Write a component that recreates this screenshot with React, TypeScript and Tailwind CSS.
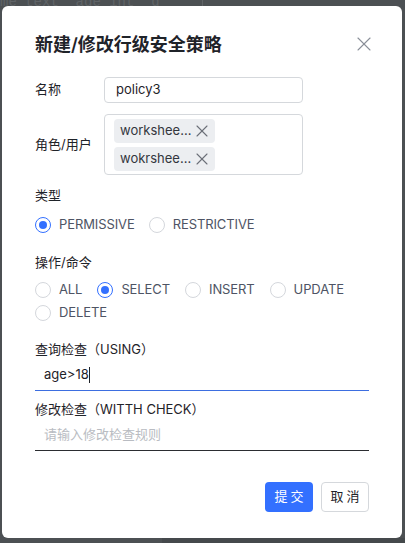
import { X } from "lucide-react";

const FONT = "font-['Inter','Noto_Sans_CJK_SC',sans-serif]";

function Radio({ label, checked, wide }: { label: string; checked?: boolean; wide?: boolean }) {
  return (
    <label className={`flex items-center h-[23px] ${wide ? "mr-[15px]" : "mr-[14px]"}`}>
      <span
        className={`flex items-center justify-center w-[16px] h-[16px] rounded-full border ${
          checked ? "border-[#3370ff]" : "border-[#d4d7dc]"
        }`}
      >
        {checked && <span className="w-[8px] h-[8px] rounded-full bg-[#3370ff]" />}
      </span>
      <span className="ml-[8px] text-[13px] text-[#4e5464] tracking-[-0.1px]">{label}</span>
    </label>
  );
}

function Tag({ text }: { text: string }) {
  return (
    <div className="flex items-center w-[101px] h-[24px] rounded-[4px] bg-[#eceef1] pl-[6px]">
      <span className="text-[13px] text-[#33363d]">{text}</span>
      <X className="ml-[1px] w-[20px] h-[20px] text-[#6b6f78]" strokeWidth={1.3} />
    </div>
  );
}

export default function App() {
  return (
    <div className={`relative w-[405px] h-[543px] overflow-hidden bg-[#4c5053] ${FONT}`}>
      {/* page behind the overlay */}
      <div className="absolute left-[0px] top-[-8px] font-['Liberation_Mono',monospace] text-[14px] text-[#5f6366] whitespace-pre">
        me text  age int  d
      </div>
      <div className="absolute left-[202px] top-0 w-px h-[8px] bg-[#5f6366]" />
      <div className="absolute left-[162px] top-[538px] w-[243px] h-[5px] bg-[#45494c]" />

      <div className="absolute left-[2px] top-[6px] w-[400px] h-[532px] rounded-[6px] bg-white pl-[33px] pr-[33px] pt-[25px]">
        <div className="flex items-center justify-between h-[26px]">
          <h2 className="text-[18px] font-semibold text-[#1f2329]">新建/修改行级安全策略</h2>
          <X className="w-[24px] h-[24px] text-[#8a8f99] mr-[-7px]" strokeWidth={1.1} />
        </div>

        <div className="flex items-center mt-[20px]">
          <span className="w-[69px] text-[13px] text-[#1f2329]">名称</span>
          <div className="flex items-center w-[199px] h-[26px] rounded-[4px] border border-[#d5d8dc] px-[11px] text-[13px] text-[#1f2329]">
            policy3
          </div>
        </div>

        <div className="flex items-center mt-[11px]">
          <span className="w-[69px] text-[13px] text-[#1f2329]">角色/用户</span>
          <div className="flex flex-col gap-[4px] w-[199px] h-[61px] rounded-[4px] border border-[#d5d8dc] pl-[9px] pt-[4px]">
            <Tag text="workshee..." />
            <Tag text="wokrshee..." />
          </div>
        </div>

        <div className="mt-[10px] h-[20px] leading-[20px] text-[13px] text-[#1f2329]">类型</div>
        <div className="flex mt-[8px]">
          <Radio label="PERMISSIVE" checked />
          <Radio label="RESTRICTIVE" />
        </div>

        <div className="mt-[16px] h-[20px] leading-[20px] text-[13px] text-[#1f2329]">操作/命令</div>
        <div className="flex flex-wrap w-[330px] mt-[6px]">
          <Radio label="ALL" wide />
          <Radio label="SELECT" checked wide />
          <Radio label="INSERT" wide />
          <Radio label="UPDATE" wide />
          <Radio label="DELETE" wide />
        </div>

        <div className="mt-[15px] h-[20px] leading-[20px] text-[13px] text-[#1f2329]">查询检查（USING）</div>
        <div className="flex items-center h-[32px] border-b border-[#3d6ee0] pl-[9px] text-[13px] text-[#1f2329]">
          age&gt;18<span className="w-px h-[16px] bg-[#1f2329]" />
        </div>

        <div className="mt-[8px] h-[20px] leading-[20px] text-[13px] text-[#1f2329]">修改检查（WITTH CHECK）</div>
        <div className="flex items-center h-[32px] border-b border-[#2b2d31] pl-[9px] text-[13px] text-[#b9bcc2]">
          请输入修改检查规则
        </div>

        <div className="flex justify-end gap-[8px] mt-[31px]">
          <button className="w-[48px] h-[30px] rounded-[4px] bg-[#3370ff] text-white text-[13px] tracking-[3px] pl-[3px]">
            提交
          </button>
          <button className="w-[48px] h-[30px] rounded-[4px] border border-[#d5d8dc] bg-white text-[#1f2329] text-[13px] tracking-[3px] pl-[3px]">
            取消
          </button>
        </div>
      </div>
    </div>
  );
}
